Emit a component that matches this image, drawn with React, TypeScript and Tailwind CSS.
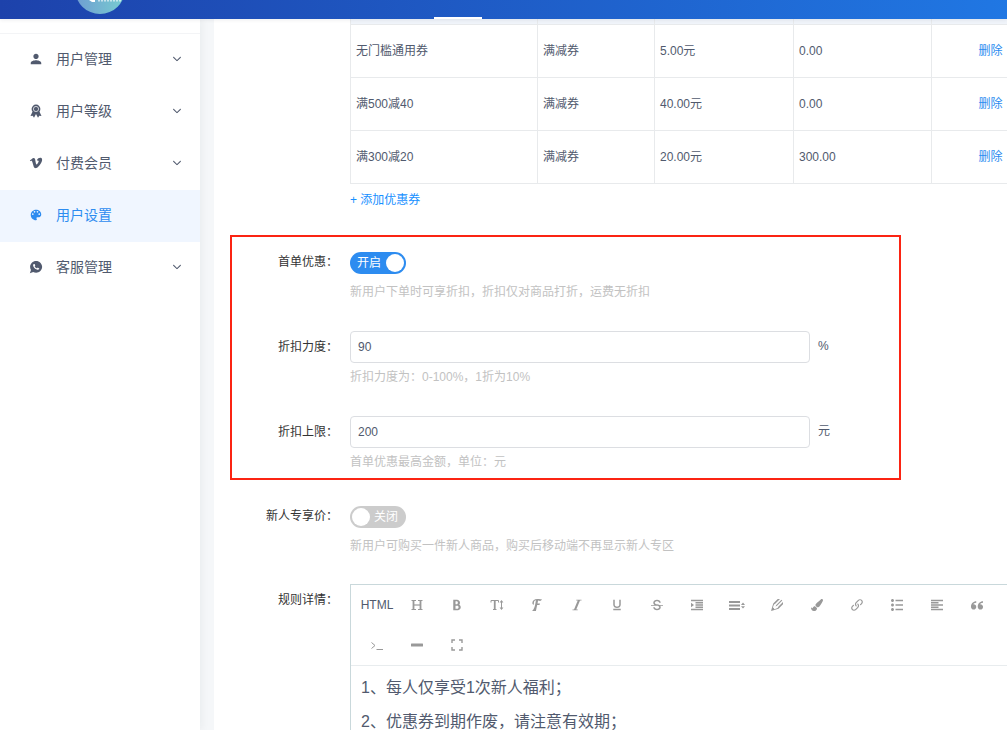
import React, { useState } from "react";
import { IoMdPerson, IoLogoVimeo, IoMdColorPalette, IoLogoWhatsapp, IoIosArrowDown } from "react-icons/io";
import { FaPaintBrush } from "react-icons/fa";
import {
    ImBold,
    ImFont,
    ImItalic,
    ImUnderline,
    ImStrikethrough,
    ImIndentIncrease,
    ImPencil2,
    ImLink,
    ImList2,
    ImParagraphLeft,
    ImQuotesLeft,
} from "react-icons/im";

const RibbonIcon = ({ className }: { className?: string }) => (
    <svg viewBox="0 0 14 14" className={className} fill="currentColor">
        <path d="M3.600 7.600L1.500 12l2.200-.3L5 13.700l2-3.600 2 3.600 1.300-2 2.200.3-2.100-4.400z" />
        <circle cx="7" cy="5" r="4.400" />
        <circle cx="7" cy="5" r="2.600" fill="none" stroke="#fff" strokeWidth=".7" />
    </svg>
);

const menus = [
    { name: "用户管理", icon: IoMdPerson },
    { name: "用户等级", icon: RibbonIcon },
    { name: "付费会员", icon: IoLogoVimeo },
    { name: "用户设置", icon: IoMdColorPalette, active: true },
    { name: "客服管理", icon: IoLogoWhatsapp },
];

const coupons = [
    { name: "无门槛通用券", type: "满减券", price: "5.00元", min: "0.00" },
    { name: "满500减40", type: "满减券", price: "40.00元", min: "0.00" },
    { name: "满300减20", type: "满减券", price: "20.00元", min: "300.00" },
];

const HeaderIcon = () => (
    <svg viewBox="0 0 14 14" className="w-[14px] h-[14px]" fill="none" stroke="currentColor">
        <path d="M1.500 2.500H6M8 2.500h4.500M1.500 11.500H6M8 11.500h4.500" />
        <path d="M3.500 2.500v9M10.500 2.500v9" strokeWidth="1.800" />
        <path d="M3.500 7h7" strokeWidth="1.200" />
    </svg>
);

const TextHeightIcon = () => (
    <svg viewBox="0 0 14 14" className="w-[14px] h-[14px]" fill="none" stroke="currentColor">
        <path d="M1 4.500v-2h7.500v2M3 11.500h3.500" />
        <path d="M4.750 2.500v9" strokeWidth="1.800" />
        <path d="M11.500 4v6" />
        <path d="M9.600 4.600L11.500 2l1.900 2.600zM9.600 9.400l1.900 2.600 1.900-2.600z" fill="currentColor" stroke="none" />
    </svg>
);

const LineHeightIcon = () => (
    <svg viewBox="0 0 18 14" className="w-[18px] h-[14px]" fill="currentColor">
        <path d="M1 3h11v2H1zM1 6.500h11v2H1zM1 10h11v2H1z" />
        <path d="M13 7l2-2.400L17 7zM13 8.200l2 2.400 2-2.400z" />
    </svg>
);

const TerminalIcon = () => (
    <svg viewBox="0 0 14 14" className="w-[14px] h-[14px]" fill="none" stroke="currentColor">
        <path d="M1.500 4.500L5 7.500l-3.500 3M6.500 11.500H13" />
    </svg>
);

const SplitLineIcon = () => (
    <svg viewBox="0 0 14 14" className="w-[14px] h-[14px]" fill="currentColor">
        <rect x="1" y="5.500" width="12" height="3" rx="0.500" />
    </svg>
);

const FullscreenIcon = () => (
    <svg viewBox="0 0 14 14" className="w-[14px] h-[14px]" fill="none" stroke="currentColor" strokeWidth="1.400">
        <path d="M2 5V2h3M9 2h3v3M12 9v3H9M5 12H2V9" />
    </svg>
);

const tools = [
    { title: "标题", icon: HeaderIcon },
    { title: "加粗", icon: ImBold },
    { title: "字号", icon: TextHeightIcon },
    { title: "字体", icon: ImFont },
    { title: "斜体", icon: ImItalic },
    { title: "下划线", icon: ImUnderline },
    { title: "删除线", icon: ImStrikethrough },
    { title: "缩进", icon: ImIndentIncrease },
    { title: "行高", icon: LineHeightIcon },
    { title: "文字颜色", icon: ImPencil2 },
    { title: "背景色", icon: FaPaintBrush },
    { title: "链接", icon: ImLink },
    { title: "序列", icon: ImList2 },
    { title: "对齐", icon: ImParagraphLeft },
    { title: "引用", icon: ImQuotesLeft },
    { title: "代码", icon: TerminalIcon },
    { title: "分割线", icon: SplitLineIcon },
    { title: "全屏", icon: FullscreenIcon },
];

function Switch({ id, on, onChange }: { id: string; on: boolean; onChange: () => void }) {
    return (
        <div className="h-8 pt-[6px]">
            <button
                id={id}
                type="button"
                role="switch"
                aria-checked={on}
                onClick={onChange}
                className={`flex items-center justify-between w-14 h-[22px] rounded-full text-white ${
                    on ? "bg-[#2d8cf0] pl-[7px] pr-[2px]" : "bg-[#ccc] flex-row-reverse pr-2 pl-[2px]"
                }`}
            >
                <span>{on ? "开启" : "关闭"}</span>
                <span className="w-[18px] h-[18px] rounded-full bg-white" />
            </button>
        </div>
    );
}

function FormItem({ id, label, hint, children }: { id: string; label: string; hint?: string; children: React.ReactNode }) {
    return (
        <div className="flex">
            <label htmlFor={id} className="w-[120px] shrink-0 pr-3 text-right leading-8 text-[#333]">
                {label}
            </label>
            <div className="shrink-0">
                {children}
                {hint && <p className="mt-1 leading-5 text-[#c2c2c2]">{hint}</p>}
            </div>
        </div>
    );
}

function NumberField({ id, value, unit }: { id: string; value: string; unit: string }) {
    return (
        <div className="flex items-start gap-2">
            <input
                id={id}
                defaultValue={value}
                className="w-[460px] h-8 px-[7px] border border-[#dcdee2] rounded outline-none focus:border-[#57a3f3]"
            />
            <span className="leading-[30px]">{unit}</span>
        </div>
    );
}

export default function App() {
    const [firstOrder, setFirstOrder] = useState(true);
    const [newcomer, setNewcomer] = useState(false);

    return (
        <div className="h-screen flex flex-col overflow-hidden bg-[#f5f7f9] text-xs text-[#515a6e] font-['Liberation_Sans','Noto_Sans_CJK_SC',sans-serif]">
            <header className="relative z-10 h-[19px] shrink-0 flex items-end bg-linear-to-r from-[#1d42ab] to-[#2077e3] shadow-[0_1px_4px_rgba(0,21,41,0.08)]">
                <div className="w-[200px] h-full overflow-hidden">
                    <svg viewBox="0 0 50 19" className="ml-[75px] w-[50px] h-[19px]">
                        <defs>
                            <linearGradient id="logo" x1="0" x2="1">
                                <stop offset="0" stopColor="#6f9dd2" />
                                <stop offset="1" stopColor="#78cdd0" />
                            </linearGradient>
                        </defs>
                        <circle cx="25" cy="-11" r="25" fill="url(#logo)" />
                        <path d="M14 0h6v2h-3z" fill="#fff" />
                        <path d="M23 .8h24" stroke="#fff" strokeOpacity=".6" strokeWidth="1.500" strokeDasharray="2 1" />
                    </svg>
                </div>
                <div className="ml-[234px] w-12 h-[2px] bg-white" />
            </header>

            <div className="flex flex-1 min-h-0">
                <aside className="w-[200px] shrink-0 bg-white shadow-[2px_0_8px_rgba(29,35,41,0.05)]">
                    <nav className="mt-[14px] border-t border-[#f3f4f6]">
                        {menus.map((m) => (
                            <a
                                key={m.name}
                                href="#"
                                className={`flex items-center h-[52px] pl-[29px] pr-[17px] pb-[2px] text-sm ${
                                    m.active ? "bg-[#f0f6ff] text-[#2d8cf0]" : ""
                                }`}
                            >
                                <m.icon className="w-[14px] h-[14px]" />
                                <span className="ml-[13px] flex-1">{m.name}</span>
                                {!m.active && <IoIosArrowDown className="w-3 h-3" />}
                            </a>
                        ))}
                    </nav>
                </aside>

                <main className="ml-[14px] flex-1 min-w-0 overflow-hidden bg-white">
                    <div className="ml-[136px]">
                        <table className="w-[700px] table-fixed border-collapse border border-[#dcdee2] border-t-0">
                            <colgroup>
                                <col className="w-[187px]" />
                                <col className="w-[117px]" />
                                <col className="w-[139px]" />
                                <col className="w-[138px]" />
                                <col />
                            </colgroup>
                            <tbody>
                                <tr className="h-[5px] bg-[#f0f4fa]">
                                    {[0, 1, 2, 3, 4].map((i) => (
                                        <td key={i} className="border-x border-b border-[#e8eaec]" />
                                    ))}
                                </tr>
                                {coupons.map((c) => (
                                    <tr key={c.name} className="h-[53px]">
                                        <td className="border border-[#e8eaec] px-[5px]">{c.name}</td>
                                        <td className="border border-[#e8eaec] px-[5px]">{c.type}</td>
                                        <td className="border border-[#e8eaec] px-[5px]">{c.price}</td>
                                        <td className="border border-[#e8eaec] px-[5px]">{c.min}</td>
                                        <td className="border border-[#e8eaec] text-center">
                                            <a href="#" className="text-[#2d8cf0]">
                                                删除
                                            </a>
                                        </td>
                                    </tr>
                                ))}
                            </tbody>
                        </table>
                        <button type="button" className="block mt-[6px] h-5 text-[#1890ff]">
                            + 添加优惠券
                        </button>
                    </div>

                    {/* first order discount */}
                    <section className="mt-[25px] ml-4 w-[671px] border-2 border-[#fb2413] pt-[9px] pb-[6px]">
                        <div className="-ml-[2px] flex flex-col gap-[29px]">
                            <FormItem id="first" label="首单优惠：" hint="新用户下单时可享折扣，折扣仅对商品打折，运费无折扣">
                                <Switch id="first" on={firstOrder} onChange={() => setFirstOrder(!firstOrder)} />
                            </FormItem>
                            <FormItem id="rate" label="折扣力度：" hint="折扣力度为：0-100%，1折为10%">
                                <NumberField id="rate" value="90" unit="%" />
                            </FormItem>
                            <FormItem id="limit" label="折扣上限：" hint="首单优惠最高金额，单位：元">
                                <NumberField id="limit" value="200" unit="元" />
                            </FormItem>
                        </div>
                    </section>

                    <div className="mt-5 ml-4 flex flex-col gap-7">
                        <FormItem id="newcomer" label="新人专享价：" hint="新用户可购买一件新人商品，购买后移动端不再显示新人专区">
                            <Switch id="newcomer" on={newcomer} onChange={() => setNewcomer(!newcomer)} />
                        </FormItem>
                        <FormItem id="detail" label="规则详情：">
                            <div className="w-[680px] border border-[#c9d8db]">
                                <div className="flex flex-wrap pl-[6px] border-b border-[#e8ecee] text-[#999]">
                                    <button type="button" className="w-10 h-10 flex items-center justify-center text-[#515a6e]">
                                        HTML
                                    </button>
                                    {tools.map((t) => (
                                        <button
                                            key={t.title}
                                            type="button"
                                            aria-label={t.title}
                                            className="w-10 h-10 flex items-center justify-center hover:text-[#333]"
                                        >
                                            <t.icon />
                                        </button>
                                    ))}
                                </div>
                                <div
                                    id="detail"
                                    contentEditable
                                    suppressContentEditableWarning
                                    className="h-[300px] px-[10px] pt-[10px] text-base outline-none"
                                >
                                    <p className="mb-[10px]">1、每人仅享受1次新人福利；</p>
                                    <p className="mb-[10px]">2、优惠券到期作废，请注意有效期；</p>
                                </div>
                            </div>
                        </FormItem>
                    </div>
                </main>
            </div>
        </div>
    );
}
